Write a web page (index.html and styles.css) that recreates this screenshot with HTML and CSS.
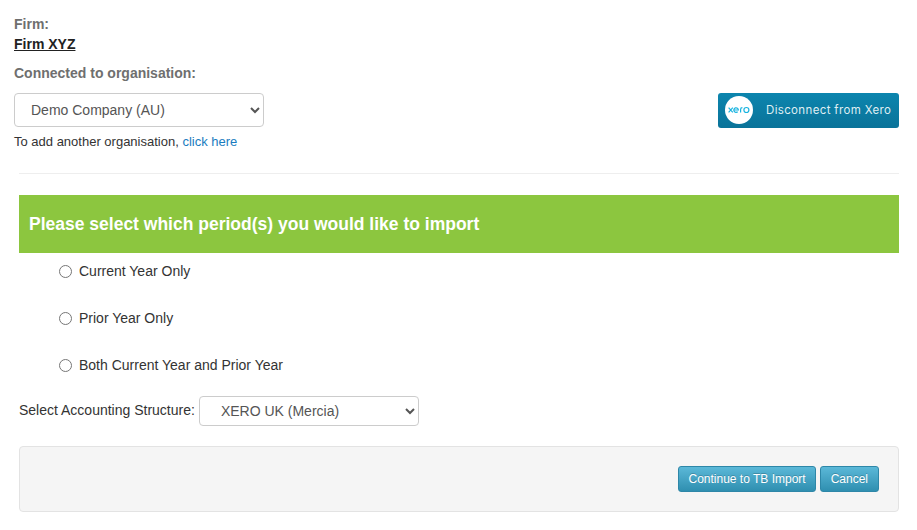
FILE: index.html
```html
<!DOCTYPE html>
<html lang="en">
<head>
    <meta charset="UTF-8">
    <meta name="viewport" content="width=device-width, initial-scale=1.0">
    <title>Xero Import</title>
    <link rel="stylesheet" href="styles.css">
</head>
<body>

<div class="page">
    <!-- Firm and organisation -->
    <div class="top-row">
        <div class="org-info">
            <div class="field-label">Firm:</div>
            <div class="firm-name">Firm XYZ</div>
            <label class="field-label org-label" for="org-select">Connected to organisation:</label>
            <select id="org-select" class="org-select">
                <option>Demo Company (AU)</option>
            </select>
            <p class="add-org">To add another organisation, <a href="#">click here</a></p>
        </div>
        <a href="#" class="xero-btn">
            <svg class="xero-logo" width="28" height="28" viewBox="0 0 28 28">
                <circle cx="14" cy="14" r="14" fill="#fff"/>
                <g fill="none" stroke="#1ab4e0" stroke-width="1.2">
                    <path d="M3.6 11.6l4.2 4.8M7.8 11.6l-4.2 4.8"/>
                    <path d="M9 14h4.4a2.3 2.3 0 1 0-.7 1.8"/>
                    <path d="M15.6 16.4v-3a1.8 1.8 0 0 1 1.8-1.8"/>
                    <circle cx="21.4" cy="14" r="2.5"/>
                </g>
            </svg>
            <span>Disconnect from Xero</span>
        </a>
    </div>

    <hr class="divider">

    <!-- Period selection -->
    <h2 class="period-title">Please select which period(s) you would like to import</h2>
    <div class="period-list">
        <label class="period-option"><input type="radio" name="period"> Current Year Only</label>
        <label class="period-option"><input type="radio" name="period"> Prior Year Only</label>
        <label class="period-option"><input type="radio" name="period"> Both Current Year and Prior Year</label>
    </div>

    <div class="structure-row">
        <label class="structure-label" for="structure-select">Select Accounting Structure:</label>
        <select id="structure-select" class="structure-select">
            <option>XERO UK (Mercia)</option>
        </select>
    </div>

    <div class="actions">
        <button class="btn-info btn-continue">Continue to TB Import</button>
        <button class="btn-info">Cancel</button>
    </div>
</div>

</body>
</html>
```
FILE: styles.css
```css
body {
    font-family: "Liberation Sans", Arial, sans-serif;
    font-size: 14px;
    margin: 0;
    background-color: #fff;
    color: #333;
}
.page {
    padding: 16px 18px 0 14px;
}
.top-row {
    display: flex;
    justify-content: space-between;
    align-items: flex-start;
}
.field-label {
    display: block;
    font-weight: bold;
    color: #6f6f6f;
    line-height: 16px;
}
.firm-name {
    margin-top: 4px;
    font-weight: bold;
    line-height: 16px;
    color: #222;
    text-decoration: underline;
}
.org-label {
    margin-top: 13px;
}
.org-select {
    display: block;
    width: 250px;
    height: 34px;
    margin-top: 12px;
    padding: 0 12px;
    font-family: inherit;
    font-size: 14px;
    color: #555;
    background-color: #fff;
    border: 1px solid #ccc;
    border-radius: 4px;
}
.add-org {
    margin: 7px 0 0;
    font-size: 13px;
    line-height: 16px;
    color: #333;
}
.add-org a {
    color: #1a7cc0;
    text-decoration: none;
}
.xero-btn {
    display: flex;
    align-items: center;
    width: 181px;
    height: 35px;
    margin-top: 77px;
    box-sizing: border-box;
    padding: 0 0 1px 7px;
    border-radius: 3px;
    background-image: linear-gradient(to bottom, #0c85ae, #0a7399);
    color: #dfeef3;
    font-family: Inter, sans-serif;
    font-size: 11.5px;
    letter-spacing: 0.35px;
    text-decoration: none;
}
.xero-logo {
    flex-shrink: 0;
    margin-right: 13px;
}
.divider {
    margin: 23px 0 0 5px;
    border: none;
    border-top: 1px solid #eee;
}
.period-title {
    margin: 21px 0 0 5px;
    padding: 0 10px;
    height: 58px;
    line-height: 58px;
    font-size: 17.5px;
    font-weight: bold;
    color: #fff;
    background-color: #8cc63f;
}
.period-list {
    display: flex;
    flex-direction: column;
    gap: 27px;
    margin: 8px 0 0 45px;
}
.period-option {
    display: flex;
    align-items: center;
    height: 20px;
    color: #333;
}
.period-option input {
    width: 13px;
    height: 13px;
    margin: 0 7px 0 0;
}
.structure-row {
    display: flex;
    align-items: center;
    gap: 4px;
    margin: 21px 0 0 5px;
}
.structure-label {
    padding-bottom: 2px;
}
.structure-select {
    width: 220px;
    height: 30px;
    padding: 0 17px;
    font-family: inherit;
    font-size: 14px;
    color: #555;
    background-color: #fff;
    border: 1px solid #ccc;
    border-radius: 4px;
}
.actions {
    display: flex;
    justify-content: flex-end;
    gap: 4px;
    box-sizing: border-box;
    height: 66px;
    margin: 20px 0 0 5px;
    padding: 19px;
    background-color: #f5f5f5;
    border: 1px solid #e3e3e3;
    border-radius: 4px;
}
.btn-info {
    height: 26px;
    padding: 0 10px;
    font-family: inherit;
    font-size: 12px;
    color: #fff;
    text-shadow: 0 -1px 0 rgba(0, 0, 0, 0.2);
    background-image: linear-gradient(to bottom, #5bb8d8, #2f8fb0);
    border: 1px solid #2e87a8;
    border-radius: 3px;
    cursor: pointer;
}
.btn-continue {
    padding: 0 9px;
}
```
